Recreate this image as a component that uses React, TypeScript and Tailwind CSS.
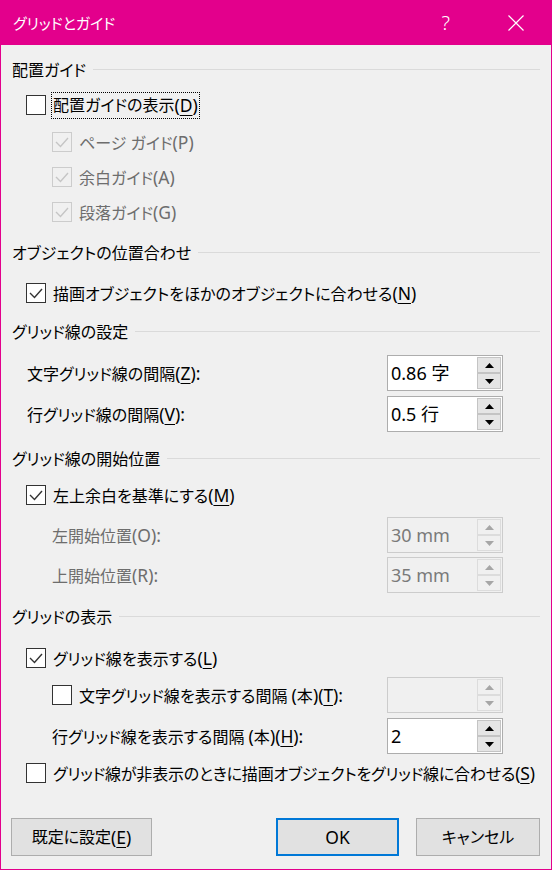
import React from "react";

const FONT =
  "font-['Noto_Sans','Noto_Sans_CJK_JP',sans-serif] [font-feature-settings:'palt']";

function U({ children }: { children: React.ReactNode }) {
  return <span className="underline underline-offset-[3px] decoration-1">{children}</span>;
}

function L({ children }: { children: React.ReactNode }) {
  return <span className="text-[17.5px]">{children}</span>;
}

function K({ k, colon, u = true }: { k: string; colon?: boolean; u?: boolean }) {
  return (
    <span className="text-[17.5px]">
      ({u ? <U>{k}</U> : k}){colon ? ":" : ""}
    </span>
  );
}

function Check({ checked, disabled }: { checked?: boolean; disabled?: boolean }) {
  const c = disabled ? "#c5c5c5" : "#333333";
  return (
    <span
      className={`relative w-[20px] h-[20px] shrink-0 border ${
        disabled ? "border-[#cccccc] bg-[#f0f0f0]" : "border-[#333333] bg-white"
      }`}
    >
      {checked && (
        <svg className="absolute left-[-1px] top-[-1px]" width="20" height="20" viewBox="0 0 20 20">
          <polyline points="4,10 8.5,14.5 16,6" fill="none" stroke={c} strokeWidth="1.4" />
        </svg>
      )}
    </span>
  );
}

function Arrow({ up, color }: { up?: boolean; color: string }) {
  return (
    <svg width="9" height="5" viewBox="0 0 9 5">
      <polygon points={up ? "0,5 9,5 4.5,0" : "0,0 9,0 4.5,5"} fill={color} />
    </svg>
  );
}

function Spin({ value, disabled }: { value?: string; disabled?: boolean }) {
  const arrow = disabled ? "#a6a6a6" : "#000000";
  const btn = disabled
    ? "bg-[#f0f0f0] border border-[#dcdcdc]"
    : "bg-[#e5e5e5] border border-[#c4c4c4]";
  return (
    <div
      className={`w-[116px] h-[36px] flex border ${
        disabled ? "border-[#cccccc] bg-[#f0f0f0] text-[#7a7a7a]" : "border-[#adadad] bg-white text-black"
      }`}
    >
      <div className="flex-1 flex items-center pl-[3px] text-[18px]">{value}</div>
      <div className="w-[25px] flex flex-col pt-[1px] pb-[1px] pr-[1px]">
        <div className={`flex-1 flex items-center justify-center ${btn}`}>
          <Arrow up color={arrow} />
        </div>
        <div className={`flex-1 flex items-center justify-center ${btn}`}>
          <Arrow color={arrow} />
        </div>
      </div>
    </div>
  );
}

function Header({ children, mt }: { children: React.ReactNode; mt: string }) {
  return (
    <div className={`h-[24px] flex items-center pl-[11px] pr-[11px] ${mt}`}>
      <span className="whitespace-nowrap">{children}</span>
      <div className="flex-1 h-px bg-[#dadada] ml-[7px] mt-[-2px]" />
    </div>
  );
}

function CheckRow({
  children,
  checked,
  disabled,
  indent,
  mt,
}: {
  children: React.ReactNode;
  checked?: boolean;
  disabled?: boolean;
  indent: string;
  mt: string;
}) {
  return (
    <div className={`h-[30px] flex items-center ${indent} ${mt} ${disabled ? "text-[#6d6d6d]" : ""}`}>
      <Check checked={checked} disabled={disabled} />
      <span className="ml-[7px] whitespace-nowrap">{children}</span>
    </div>
  );
}

function SpinRow({
  label,
  value,
  disabled,
  indent,
  mt,
}: {
  label: React.ReactNode;
  value?: string;
  disabled?: boolean;
  indent: string;
  mt: string;
}) {
  return (
    <div className={`h-[36px] flex items-center ${indent} pr-[48px] ${mt}`}>
      <span className={`whitespace-nowrap ${disabled ? "text-[#6d6d6d]" : ""}`}>{label}</span>
      <div className="flex-1" />
      <Spin value={value} disabled={disabled} />
    </div>
  );
}

export default function App() {
  return (
    <div
      className={`w-[552px] h-[870px] bg-[#f0f0f0] border border-[#e3008c] flex flex-col text-[16px] text-black ${FONT}`}
    >
      {/* title bar */}
      <div className="h-[44px] bg-[#e3008c] flex items-center text-white shrink-0">
        <span className="ml-[12px] text-[15px]">グリッドとガイド</span>
        <div className="flex-1" />
        <span className="text-[20px] font-light mr-[58px] mt-[-1px]">?</span>
        <svg className="mr-[27px]" width="16" height="16" viewBox="0 0 16 16">
          <path d="M0.5 0.5 L15.5 15.5 M15.5 0.5 L0.5 15.5" stroke="white" strokeWidth="1.2" />
        </svg>
      </div>

      <Header mt="mt-[13px]">配置ガイド</Header>
      <div className="h-[30px] flex items-center pl-[25px] mt-[8px]">
        <Check />
        <span className="ml-[5px] whitespace-nowrap border border-dotted border-black px-[1px] h-[27px] flex items-center">
          配置ガイドの表示<K k="D" />
        </span>
      </div>
      <CheckRow checked disabled indent="pl-[51px]" mt="mt-[7px]">
        ページ ガイド<K k="P" u={false} />
      </CheckRow>
      <CheckRow checked disabled indent="pl-[51px]" mt="mt-[5px]">
        余白ガイド<K k="A" u={false} />
      </CheckRow>
      <CheckRow checked disabled indent="pl-[51px]" mt="mt-[5px]">
        段落ガイド<K k="G" u={false} />
      </CheckRow>

      <Header mt="mt-[14px]">オブジェクトの位置合わせ</Header>
      <CheckRow checked indent="pl-[25px]" mt="mt-[13px]">
        描画オブジェクトをほかのオブジェクトに合わせる<K k="N" />
      </CheckRow>

      <Header mt="mt-[12px]">グリッド線の設定</Header>
      <SpinRow
        indent="pl-[26px]"
        mt="mt-[11px]"
        label={
          <>
            文字グリッド線の間隔<K k="Z" colon />
          </>
        }
        value="0.86 字"
      />
      <SpinRow
        indent="pl-[26px]"
        mt="mt-[5px]"
        label={
          <>
            行グリッド線の間隔<K k="V" colon />
          </>
        }
        value="0.5 行"
      />

      <Header mt="mt-[15px]">グリッド線の開始位置</Header>
      <CheckRow checked indent="pl-[25px]" mt="mt-[9px]">
        左上余白を基準にする<K k="M" />
      </CheckRow>
      <SpinRow
        indent="pl-[51px]"
        mt="mt-[7px]"
        label={
          <>
            左開始位置<K k="O" colon u={false} />
          </>
        }
        value="30 mm"
        disabled
      />
      <SpinRow
        indent="pl-[51px]"
        mt="mt-[4px]"
        label={
          <>
            上開始位置<K k="R" colon u={false} />
          </>
        }
        value="35 mm"
        disabled
      />

      <Header mt="mt-[12px]">グリッドの表示</Header>
      <CheckRow checked indent="pl-[25px]" mt="mt-[14px]">
        グリッド線を表示する<K k="L" />
      </CheckRow>
      <div className="h-[36px] flex items-center pl-[51px] pr-[48px] mt-[4px]">
        <Check />
        <span className="ml-[7px] whitespace-nowrap">
          文字グリッド線を表示する間隔 <L>(</L>本<L>)</L>
          <K k="T" colon />
        </span>
        <div className="flex-1" />
        <Spin disabled />
      </div>
      <SpinRow
        indent="pl-[51px]"
        mt="mt-[5px]"
        label={
          <>
            行グリッド線を表示する間隔 <L>(</L>本<L>)</L>
            <K k="H" colon />
          </>
        }
        value="2"
      />
      <CheckRow indent="pl-[25px]" mt="mt-[4px]">
        <span className="tracking-[-0.2px]">
          グリッド線が非表示のときに描画オブジェクトをグリッド線に合わせる<K k="S" />
        </span>
      </CheckRow>

      {/* buttons */}
      <div className="flex items-center pl-[10px] pr-[11px] mt-[30px]">
        <div className="w-[141px] h-[38px] bg-[#e1e1e1] border border-[#adadad] flex items-center justify-center">
          既定に設定<K k="E" />
        </div>
        <div className="flex-1" />
        <div className="w-[123px] h-[38px] bg-[#e1e1e1] border-2 border-[#0078d7] flex items-center justify-center text-[17.5px]">
          OK
        </div>
        <div className="w-[124px] h-[38px] ml-[17px] bg-[#e1e1e1] border border-[#adadad] flex items-center justify-center">
          キャンセル
        </div>
      </div>
    </div>
  );
}
